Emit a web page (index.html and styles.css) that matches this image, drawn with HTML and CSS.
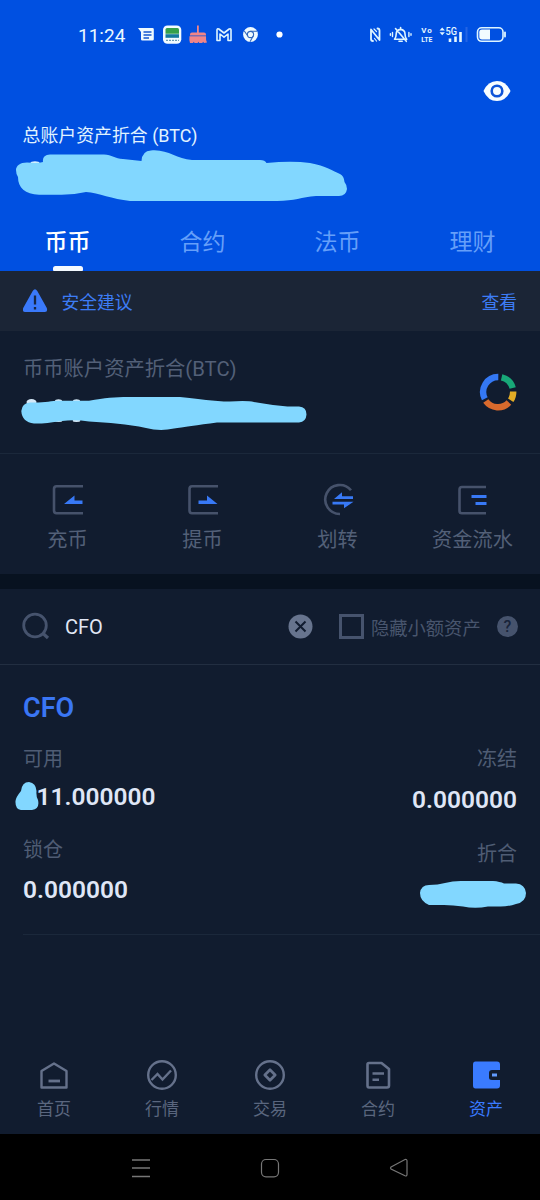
FILE: index.html
```html
<!DOCTYPE html>
<html lang="zh-CN">
<head>
<meta charset="utf-8">
<title>资产</title>
<link rel="stylesheet" href="styles.css">
</head>
<body>
<div class="screen">
  <header class="hero">
    <div class="status">
      <span class="clock">11:24</span>
      <svg class="status-left" width="150" height="30" viewBox="136 20 150 30">
        <path d="M138 28h14.500q1.300 0 1.300 1.300v10q0 1.300-1.300 1.300h-10.200q-1.300 0-1.300-1.300v-7.300z" fill="#eefaff"/>
        <path d="M143.500 32h8M143.500 35h8M143.500 38h5.500" stroke="#1458cf" stroke-width="1.300"/>
        <rect x="163" y="25.500" width="18.300" height="18.300" rx="4.500" fill="#f2fbff"/>
        <path d="M165.500 29.500q0-1.500 1.500-1.500h10.500q1.500 0 1.500 1.500v4.200h-13.500z" fill="#35a04a"/>
        <path d="M165.500 34.200h13.500v3.600h-13.500z" fill="#147a9c"/>
        <path d="M166 40.300h13" stroke="#6d9db5" stroke-width="1.200" stroke-dasharray="2 1"/>
        <path d="M197 25.500h1.800v7h5.200q2 0 2 2v1h-16v-1q0-2 2-2h5zM190.500 36.300h15.500q-.3 3.500 1 6.200l-3 .6-.8-1.300-1 1.300h-3l-.8-1.300-.8 1.300h-3l-.8-1.300-.8 1.300h-3q-1-3-.5-6.800z" fill="#ef8588"/>
        <path d="M217 40.500v-10.500q0-1.800 1.800-1l5.200 4 5.200-4q1.800-.8 1.800 1v10.500h-3v-6.500l-4 3.200-4-3.200v6.500z" fill="none" stroke="#dff5ff" stroke-width="1.600" stroke-linejoin="round"/>
        <circle cx="250.500" cy="34.500" r="7.400" fill="#eefaff"/>
        <circle cx="250.500" cy="34.500" r="3.100" fill="#eefaff" stroke="#3168bc" stroke-width="1.100"/>
        <path d="M250.500 31.300h6.500M247.800 36l-3.500-5M253.200 36l-3.200 5.700" stroke="#3168bc" stroke-width="1.100"/>
        <circle cx="279.500" cy="34.500" r="3.100" fill="#fff"/>
      </svg>
      <svg class="status-right" width="142" height="30" viewBox="366 20 142 30">
        <g fill="none" stroke="#dff5ff" stroke-width="1.800" stroke-linejoin="round" stroke-linecap="round">
          <path d="M373 41q-2 0-2-2v-9.500l8.500 10.500v-9.500q0-2-2-2"/>
          <path d="M374 29l2.500 2.500M376.500 41l-2-2.500" stroke-width="1.200"/>
          <path d="M394.500 39.300q1.700-2 1.700-5.300 0-4 4.400-4.600 4.400.6 4.400 4.600 0 3.300 1.700 5.300zM400.600 29v-1.500M399 41.300h3.200M395.500 28.500l10.800 12.800" stroke-width="1.600"/>
          <path d="M392.500 32.500v4M390.400 33.700v1.600M408.900 32.500v4M411 33.700v1.600" stroke-width="1.400"/>
        </g>
        <text class="lte" x="421.300" y="33.200" textLength="10.500">Vo</text>
        <text class="lte" x="421.300" y="41.800" textLength="11" lengthAdjust="spacingAndGlyphs">LTE</text>
        <path d="M439.500 30.500l2.700-3 2.700 3zM439.500 32.300l2.700 3 2.700-3z" fill="#dff5ff"/>
        <text class="fiveg" x="445.500" y="34.500" textLength="11.500" lengthAdjust="spacingAndGlyphs">5G</text>
        <path d="M450 38.500v3.500M455.500 36.500v5.500M460.500 32v10" stroke="#e6f7ff" stroke-width="2.600"/>
        <path d="M466.500 27v15" stroke="#2465e4" stroke-width="2"/>
        <rect x="477.500" y="27.800" width="25.500" height="13.500" rx="4.200" fill="none" stroke="#dff5ff" stroke-width="1.600"/>
        <path d="M482 29.500h8v10h-8q-2.700 0-2.700-2.700v-4.600q0-2.700 2.700-2.700z" fill="#f2fbff"/>
        <path d="M505 32.500v4" stroke="#dff5ff" stroke-width="1.800" stroke-linecap="round"/>
      </svg>
    </div>
    <div class="eye-row">
      <svg width="28" height="22" viewBox="482.500 80 28 22">
        <path d="M483 91q4.500-10 13.500-10t13.500 10q-4.500 10-13.500 10t-13.500-10z" fill="#f7fdff"/>
        <circle cx="496.500" cy="91" r="5.300" fill="none" stroke="#0e55d8" stroke-width="2.600"/>
      </svg>
    </div>
    <div class="hero-label">总账户资产折合 (BTC)</div>
    <svg class="hero-mask" width="340" height="56" viewBox="12 148 340 56">
      <ellipse cx="35" cy="163" rx="4.500" ry="1.700" fill="#d8f2ff"/>
      <path d="M16 170C16 166 20 162.500 27 162.500Q38 163.500 43 162Q42 155 50 154.500L104 154.500C112 155 115 158.500 123 159L141.500 161Q142 151 151 150.500C168 149 176 159 192 160L260 160Q265 160 266.500 163Q292 160.500 310 163C326 166 333 171 340 174Q344 176 344.500 182Q347 185 347 189Q346 196 339 196H316C301 197 295 201 277 201H130C112 199 99 193 86 192Q73 195 60 194.800H39C25 194 18 188 18 177Q16 174 16 170Z" fill="#82d7ff"/>
    </svg>
    <nav class="tabs">
      <div class="tab tab-on">币币</div>
      <div class="tab">合约</div>
      <div class="tab">法币</div>
      <div class="tab">理财</div>
    </nav>
  </header>

  <div class="notice">
    <svg width="25" height="24" viewBox="22.500 290 25 24">
      <path d="M32.200 292Q34.500 288.500 36.800 292L46.300 309Q47.500 313.300 44 313H25Q21.500 313.300 22.700 309Z" fill="#3a79fa"/>
      <path d="M34.500 296.500v9M34.500 308v2.600" stroke="#172744" stroke-width="2.300"/>
    </svg>
    <span class="notice-text">安全建议</span>
    <span class="notice-link">查看</span>
  </div>

  <section class="account">
    <div class="account-main">
      <div class="account-label">币币账户资产折合(BTC)</div>
      <svg class="account-mask" width="290" height="38" viewBox="20 394 290 38">
        <g fill="#d5e8f7"><ellipse cx="31.500" cy="402" rx="5" ry="3"/><ellipse cx="58.500" cy="400.800" rx="3.500" ry="1.600"/><ellipse cx="76.500" cy="400.800" rx="3.500" ry="1.600"/><ellipse cx="58.500" cy="420.800" rx="3.800" ry="1.200"/><ellipse cx="76.500" cy="420.800" rx="3.800" ry="1.200"/></g>
        <path d="M21.300 411Q22 403 30 402.500C45 403 50 400.800 60 400.800H89C105 398 115 397 128 397H180C200 399 213 401.500 230 401.500Q248 400.500 254 402C266 404 280 406.500 292 406.500H299Q306.500 407 306.500 414.500Q306 422 299 422.500H217C198 425 182 427.500 174 428.500Q160 431.500 146 428C127 424 109 422.500 89 421.500Q75 419.500 62 421Q43 424 34 423.500Q22 422 21.300 411Z" fill="#82d7ff"/>
      </svg>
    </div>
    <svg class="ring" width="40" height="40" viewBox="478 371.500 40 40">
      <g fill="none" stroke-width="6.400">
        <path d="M484.800 398.300A15 15 0 0 1 498.300 376.500" stroke="#3478f4"/>
        <path d="M501.600 376.900A15 15 0 0 1 512.700 387.500" stroke="#18a878"/>
        <path d="M513.200 391A15 15 0 0 1 510.700 399.800" stroke="#e3ac25"/>
        <path d="M508.900 402A15 15 0 0 1 485.800 400.500" stroke="#d96a2d"/>
      </g>
    </svg>
  </section>

  <section class="actions">
    <div class="action">
      <svg width="34" height="34" viewBox="50.500 483 34 34">
        <path d="M82.500 486.200H56Q53.500 486.200 53.500 489V510.500Q53.500 513.200 56 513.200H82.500" fill="none" stroke="#46526b" stroke-width="2.600"/>
        <path d="M63.500 504L74 495.500V500.500H82V504Z" fill="#3879f6"/>
      </svg>
      <span>充币</span>
    </div>
    <div class="action">
      <svg width="34" height="34" viewBox="185.500 483 34 34">
        <path d="M217.500 486.200H191.500Q189 486.200 189 489V510.500Q189 513.200 191.500 513.200H217.500" fill="none" stroke="#46526b" stroke-width="2.600"/>
        <path d="M217 504L206.500 495.500V500.500H198V504Z" fill="#3879f6"/>
      </svg>
      <span>提币</span>
    </div>
    <div class="action">
      <svg width="34" height="34" viewBox="320.500 483 34 34">
        <path d="M350.500 490.300A14.500 14.500 0 1 0 339.500 514" fill="none" stroke="#46526b" stroke-width="2.600"/>
        <path d="M333.500 499L341.500 492.300V496.300H352.500V499ZM353 501.800L343.500 508.300V504.600H332V501.800Z" fill="#3879f6"/>
      </svg>
      <span>划转</span>
    </div>
    <div class="action">
      <svg width="34" height="34" viewBox="455.500 483 34 34">
        <path d="M485.500 487H461.500Q459 487 459 489.700V511Q459 513.200 461.500 513.200H485.500" fill="none" stroke="#46526b" stroke-width="2.600"/>
        <path d="M471 496.500H486M475 503.500H486" stroke="#3879f6" stroke-width="3"/>
      </svg>
      <span>资金流水</span>
    </div>
  </section>

  <div class="search">
    <svg width="28" height="29" viewBox="22 612.500 28 29">
      <circle cx="35" cy="626" r="11.300" fill="none" stroke="#46536d" stroke-width="2.800"/>
      <path d="M42.500 633.500l5.500 5" stroke="#46536d" stroke-width="3.200"/>
    </svg>
    <span class="search-text">CFO</span>
    <svg class="clear" width="25" height="25" viewBox="0 0 25 25">
      <circle cx="12.500" cy="12.500" r="12" fill="#67748e"/>
      <path d="M7.500 7.500l10 10M17.500 7.500l-10 10" stroke="#111c30" stroke-width="2"/>
    </svg>
    <span class="check"></span>
    <span class="check-text">隐藏小额资产</span>
    <span class="help">?</span>
  </div>

  <section class="asset">
    <h2 class="asset-name">CFO</h2>
    <div class="cols">
      <div class="col">
        <span class="key">可用</span>
        <span class="value covered">11.000000
          <svg class="value-mask" width="24" height="30" viewBox="15 781 24 30"><path d="M21 791Q22 782 29 782Q36 783 36.500 791Q36 797 38 800Q40 809 32 810H21Q15 809 15.500 801Q16 797 21 791Z" fill="#82d7ff"/></svg>
        </span>
        <span class="key key-2">锁仓</span>
        <span class="value value-2">0.000000</span>
      </div>
      <div class="col col-right">
        <span class="key">冻结</span>
        <span class="value">0.000000</span>
        <span class="key key-2">折合</span>
        <svg class="total-mask" width="108" height="30" viewBox="419 879 108 30"><path d="M420 893Q421 885 429 885Q438 885 445 883Q454 880.500 464 881H493Q500 881.500 504 883.500H516Q525 884 526 893Q526 902 516 904Q507 907 498 906.500H488Q475 909 463 906.500Q453 905 444 905H429Q420 901 420 893Z" fill="#82d7ff"/></svg>
      </div>
    </div>
  </section>

  <nav class="bottom">
    <div class="item">
      <svg width="34" height="34" viewBox="37 1057.500 34 34"><g fill="none" stroke="#65718b" stroke-width="2.400" stroke-linejoin="round"><path d="M41.500 1070.500L54 1063L66.500 1070.500V1087H41.500Z"/><path d="M48.500 1080.500h11.500" stroke-width="2.800"/></g></svg>
      <span>首页</span>
    </div>
    <div class="item">
      <svg width="34" height="34" viewBox="145 1057.500 34 34"><g fill="none" stroke="#65718b" stroke-width="2.400"><circle cx="162" cy="1074.500" r="13.800"/><path d="M151.500 1079.500L157.500 1073.500L162.500 1079L171 1070"/></g></svg>
      <span>行情</span>
    </div>
    <div class="item">
      <svg width="34" height="34" viewBox="253 1057.500 34 34"><g fill="none" stroke="#65718b" stroke-width="2.400"><circle cx="270" cy="1074.500" r="13.800"/><path d="M270 1069.300L275.200 1074.500L270 1079.700L264.800 1074.500Z" stroke-linejoin="round" stroke-width="2.700"/></g></svg>
      <span>交易</span>
    </div>
    <div class="item">
      <svg width="34" height="34" viewBox="361 1057.500 34 34"><g fill="none" stroke="#65718b" stroke-width="2.600" stroke-linejoin="round"><path d="M369 1062.500H381.500L389 1068.500V1085Q389 1087 387 1087H369Q367.500 1087 367.500 1085V1064Q367.500 1062.500 369 1062.500Z"/><path d="M372.500 1073H384M372.500 1079.300H379"/></g></svg>
      <span>合约</span>
    </div>
    <div class="item item-on">
      <svg width="34" height="34" viewBox="469 1057.500 34 34"><path d="M475.500 1061H497Q500 1061 500 1064V1069.500H492Q489 1069.500 489 1072.500V1077Q489 1079.500 492 1079.500H500V1085Q500 1088 497 1088H475.500Q473 1088 473 1085V1064Q473 1061 475.500 1061Z" fill="#3a7bff"/><path d="M492 1074.500h5" stroke="#629bff" stroke-width="3"/></svg>
      <span>资产</span>
    </div>
  </nav>

  <div class="system">
    <svg width="20" height="20" viewBox="131 1157.500 20 20"><path d="M132 1159.500h18M132 1167.500h18M132 1176h18" stroke="#777" stroke-width="1.300"/></svg>
    <svg width="20" height="20" viewBox="260 1157.500 20 20"><rect x="261.500" y="1159" width="17" height="17.300" rx="4.500" fill="none" stroke="#777" stroke-width="1.200"/></svg>
    <svg width="20" height="20" viewBox="389 1157.500 20 20"><path d="M391 1166.500L405 1159Q407 1158.500 407 1160.500V1174Q407 1176 405 1175.300L391 1168.500Q390 1167.500 391 1166.500Z" fill="none" stroke="#777" stroke-width="1.200"/></svg>
  </div>
</div>
</body>
</html>
```
FILE: styles.css
```css
* { box-sizing: border-box; }
body {
  margin: 0;
  background: #111c2f;
  font-family: Roboto, "Noto Sans CJK SC", sans-serif;
}
svg { display: block; flex: none; }
.screen { width: 540px; height: 1200px; display: flex; flex-direction: column; overflow: hidden; }
.hero { height: 271px; flex: none; background: #0050e1; display: flex; flex-direction: column; }
.status { height: 70px; padding: 20px 32px 0 78px; display: flex; }
.clock { width: 58px; font-size: 19px; line-height: 31px; color: #e9f8ff; }
.status-right { margin-left: auto; }
.lte { font: 700 8px Roboto, sans-serif; fill: #e6f7ff; }
.fiveg { font: 500 10px Roboto, sans-serif; fill: #e6f7ff; }
.eye-row { height: 52px; padding: 10px 29.500px 0 0; display: flex; justify-content: flex-end; }
.hero-label { height: 26px; padding-left: 22.500px; font-size: 17.900px; line-height: 28px; color: #e0f3ff; }
.hero-mask { margin-left: 12px; }
.tabs { flex: 1; display: grid; grid-template-columns: repeat(4, 1fr); }
.tab {
  display: flex; flex-direction: column; align-items: center;
  padding-top: 17px; font-size: 23px; line-height: 44px; color: #659ff9;
}
.tab-on { color: #fff; font-weight: 500; }
.tab-on::after { content: ""; width: 30px; height: 5px; margin-top: 1px; border-radius: 2.500px 2.500px 1px 1px; background: #f4faff; }
.notice { height: 60px; flex: none; padding: 0 23px 0 22.500px; display: flex; align-items: center; background: #1b2536; color: #3d7cf5; font-size: 17.800px; }
.notice-text { margin-left: 14px; }
.notice-link { margin-left: auto; }
.account { height: 123px; flex: none; padding: 22px 22px 0 23px; display: flex; border-bottom: 1px solid #1b283b; }
.account-main { flex: 1; }
.account-label { height: 41px; font-size: 20.300px; line-height: 33px; color: #536078; }
.account-mask { margin-left: -3px; }
.ring { margin-top: 18.500px; }
.actions { height: 120px; flex: none; display: grid; grid-template-columns: repeat(4, 1fr); padding-top: 29px; }
.action { display: flex; flex-direction: column; align-items: center; font-size: 20.200px; line-height: 30px; color: #536078; gap: 8px; }
.search { height: 91px; flex: none; padding: 0 22px; display: flex; align-items: center; border-top: 15px solid #081220; border-bottom: 1px solid #222e41; }
.search-text { width: 222px; margin-left: 15px; font-size: 20px; color: #e1e7f5; }
.clear { margin-left: 1px; margin-right: 26px; }
.check { width: 25px; height: 25px; border: 3px solid #46536d; margin-right: 7px; }
.check-text { flex: none; font-size: 18.300px; color: #48556d; white-space: nowrap; }
.help { flex: none; width: 21px; height: 21px; margin-left: auto; border-radius: 50%; background: #46536d; color: #18243a; font-size: 16px; line-height: 21px; text-align: center; font-weight: 500; }
.asset { height: 270px; flex: none; margin-left: 23px; padding: 24px 23px 0 0; border-bottom: 1px solid #1b283b; }
.asset-name { margin: 0; font-size: 27px; line-height: 38px; font-weight: 600; color: #3a76f4; }
.cols { display: flex; justify-content: space-between; padding-top: 17px; }
.col { display: flex; flex-direction: column; }
.col-right { align-items: flex-end; }
.key { font-size: 20px; line-height: 30px; color: #4f5c74; }
.value { font-size: 24.500px; line-height: 34px; padding-top: 6px; font-weight: 600; color: #dfe6f6; }
.key-2 { padding-top: 21px; }
.value-2 { padding-top: 8px; }
.col-right .value { padding-top: 9px; }
.col-right .key-2 { padding-top: 22px; }
.covered { position: relative; padding-left: 13.500px; }
.value-mask { position: absolute; left: -8px; top: 7px; }
.total-mask { margin: 10px -10px 0 0; }
.bottom { margin-top: auto; height: 89px; flex: none; display: grid; grid-template-columns: repeat(5, 1fr); padding-top: 13px; }
.item { display: flex; flex-direction: column; align-items: center; font-size: 17px; line-height: 24px; gap: 5px; color: #5a667e; }
.item-on { color: #3a7bff; }
.system { height: 66px; flex: none; background: #000; display: flex; align-items: flex-start; justify-content: center; gap: 109px; padding-top: 23.500px; }
```
